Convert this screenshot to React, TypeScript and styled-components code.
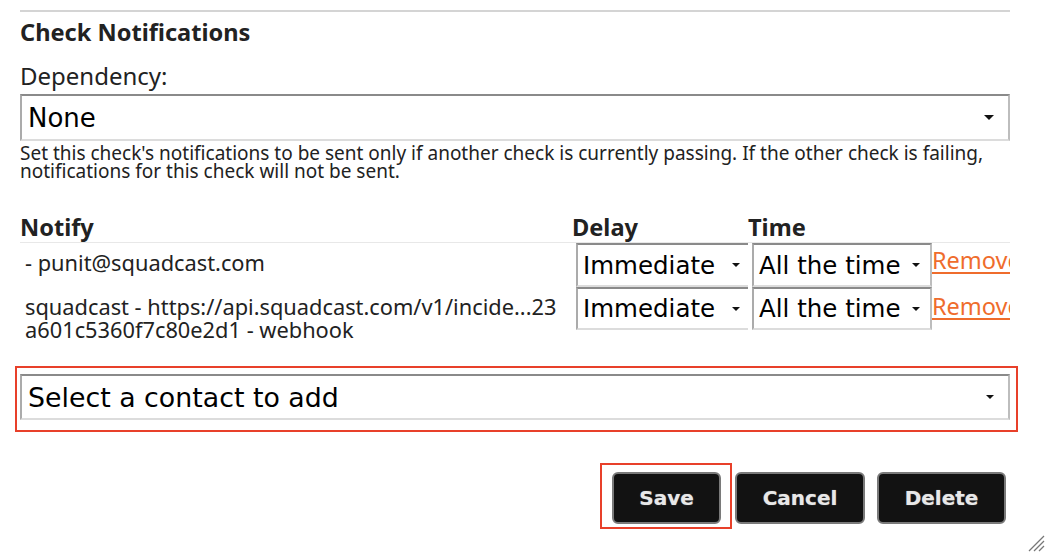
import React from "react";
import styled, { createGlobalStyle } from "styled-components";

const Global = createGlobalStyle`
  html, body { margin: 0; padding: 0; background: #fff; }
  body { font-family: "Noto Sans", "Open Sans", sans-serif; color: #222; }
`;

const Page = styled.div`
  position: relative;
  width: 1054px;
  height: 560px;
  overflow: hidden;
  box-sizing: border-box;
  padding: 10px 44px 0 20px;
`;

const Rule = styled.div`
  height: 2px;
  background: #d4d4d4;
`;

const Heading = styled.h2`
  margin: 0;
  padding-top: 5px;
  font-size: 23.6px;
  line-height: 30px;
  font-weight: 700;
  color: #222;
`;

const Label = styled.div`
  margin-top: 14px;
  font-size: 24px;
  line-height: 30px;
  color: #222;
`;

const SelectBox = styled.div<{ $big?: boolean; $height: number; $width?: number; $font?: number }>`
  box-sizing: border-box;
  display: flex;
  align-items: center;
  justify-content: space-between;
  height: ${(p) => p.$height}px;
  width: ${(p) => (p.$width ? `${p.$width}px` : "100%")};
  padding: 0 ${(p) => (p.$big ? 14 : 10)}px 0 ${(p) => (p.$big ? 6 : 5)}px;
  border-style: solid;
  border-width: 2px;
  border-color: #8a8a8a #bdbdbd #dcdcdc #ababab;
  background: #fff;
  font-family: "DejaVu Sans", "Verdana", sans-serif;
  font-size: ${(p) => p.$font ?? 24.5}px;
  color: #000;
  white-space: nowrap;
`;

const Arrow = styled.span<{ $size?: number }>`
  width: 0;
  height: 0;
  border-left: ${(p) => p.$size ?? 5}px solid transparent;
  border-right: ${(p) => p.$size ?? 5}px solid transparent;
  border-top: ${(p) => p.$size ?? 5}px solid #111;
`;

const DepSelect = styled.div`
  margin-top: 3px;
`;

const Help = styled.p`
  margin: 3px 0 0;
  font-size: 19px;
  line-height: 18px;
  color: #222;
`;

const Table = styled.div`
  margin-top: 32px;
  display: grid;
  grid-template-columns: 552px 176px 184px 1fr;
  align-items: start;
`;

const HeadCell = styled.div`
  align-self: stretch;
  font-size: 23.6px;
  line-height: 30px;
  font-weight: 700;
  color: #222;
  border-bottom: 1px solid #e8e8e8;
`;

const Cell = styled.div<{ $top?: number; $left?: number }>`
  padding: ${(p) => p.$top ?? 0}px 0 0 ${(p) => p.$left ?? 4}px;
  min-width: 0;
  overflow-x: clip;
`;

const ContactText = styled.div`
  padding: 8px 0 0 5px;
  font-size: 21.8px;
  line-height: 23px;
  color: #222;
`;

const RemoveLink = styled.a`
  display: block;
  font-size: 23.5px;
  line-height: 26px;
  color: #ef6c2c;
  text-decoration: underline;
  text-underline-offset: 3px;
  text-decoration-thickness: 2px;
  white-space: nowrap;
`;

const Highlight = styled.div`
  margin: 25px -8px 0 -5px;
  padding: 6px 6px 10px 3px;
  border: 2px solid #e8402a;
`;

const ButtonRow = styled.div`
  display: flex;
  align-items: flex-start;
  margin-top: 31px;
  padding-left: 580px;
`;

const SaveFrame = styled.div`
  padding: 7px 9px 3px 10px;
  border: 2px solid #e8402a;
  margin-right: 3px;
`;

const Button = styled.button<{ $width: number; $top?: number; $gap?: number }>`
  box-sizing: border-box;
  width: ${(p) => p.$width}px;
  height: 52px;
  margin-top: ${(p) => p.$top ?? 0}px;
  margin-right: ${(p) => p.$gap ?? 0}px;
  background: #121212;
  border: 2px solid #7a7a7a;
  border-radius: 6px;
  color: #e8e8e8;
  font-family: "DejaVu Sans", sans-serif;
  font-weight: 700;
  font-size: 20px;
  text-shadow: 0 0 1px rgba(255, 255, 255, 0.5);
  cursor: pointer;
  padding: 0;
`;

const Grip = styled.svg`
  position: absolute;
  right: 9px;
  bottom: 8px;
`;

const contacts = [
  { text: "- punit@squadcast.com", height: 44, removeTop: 4 },
  {
    text: "squadcast - https://api.squadcast.com/v1/incide...23 a601c5360f7c80e2d1 - webhook",
    height: 43,
    removeTop: 6,
  },
];

export default function App() {
  return (
    <>
      <Global />
      <Page>
        <Rule />
        <Heading>Check Notifications</Heading>
        <Label>Dependency:</Label>
        <DepSelect>
          <SelectBox $big $height={47} $font={26}>
            None
            <Arrow />
          </SelectBox>
        </DepSelect>
        <Help>
          Set this check's notifications to be sent only if another check is currently passing. If the other check is failing,
          notifications for this check will not be sent.
        </Help>
        <Table>
          <HeadCell>Notify</HeadCell>
          <HeadCell>Delay</HeadCell>
          <HeadCell>Time</HeadCell>
          <HeadCell />
          {contacts.map((c, i) => (
            <React.Fragment key={i}>
              <ContactText>{c.text}</ContactText>
              <Cell>
                <SelectBox $height={c.height} $width={176}>
                  Immediate
                  <Arrow $size={4} />
                </SelectBox>
              </Cell>
              <Cell>
                <SelectBox $height={c.height} $width={180}>
                  All the time
                  <Arrow $size={4} />
                </SelectBox>
              </Cell>
              <Cell $top={c.removeTop} $left={0}>
                <RemoveLink href="#">Remove</RemoveLink>
              </Cell>
            </React.Fragment>
          ))}
        </Table>
        <Highlight>
          <SelectBox $big $height={46} $font={26.8}>
            Select a contact to add
            <Arrow $size={4} />
          </SelectBox>
        </Highlight>
        <ButtonRow>
          <SaveFrame>
            <Button $width={109}>Save</Button>
          </SaveFrame>
          <Button $width={130} $top={9} $gap={12}>Cancel</Button>
          <Button $width={129} $top={9}>Delete</Button>
        </ButtonRow>
        <Grip width="18" height="18" viewBox="0 0 18 18">
          <line x1="2" y1="17" x2="17" y2="2" stroke="#777" strokeWidth="1.2" />
          <line x1="7" y1="17" x2="17" y2="7" stroke="#777" strokeWidth="1.2" />
          <line x1="12" y1="17" x2="17" y2="12" stroke="#777" strokeWidth="1.2" />
        </Grip>
      </Page>
    </>
  );
}
